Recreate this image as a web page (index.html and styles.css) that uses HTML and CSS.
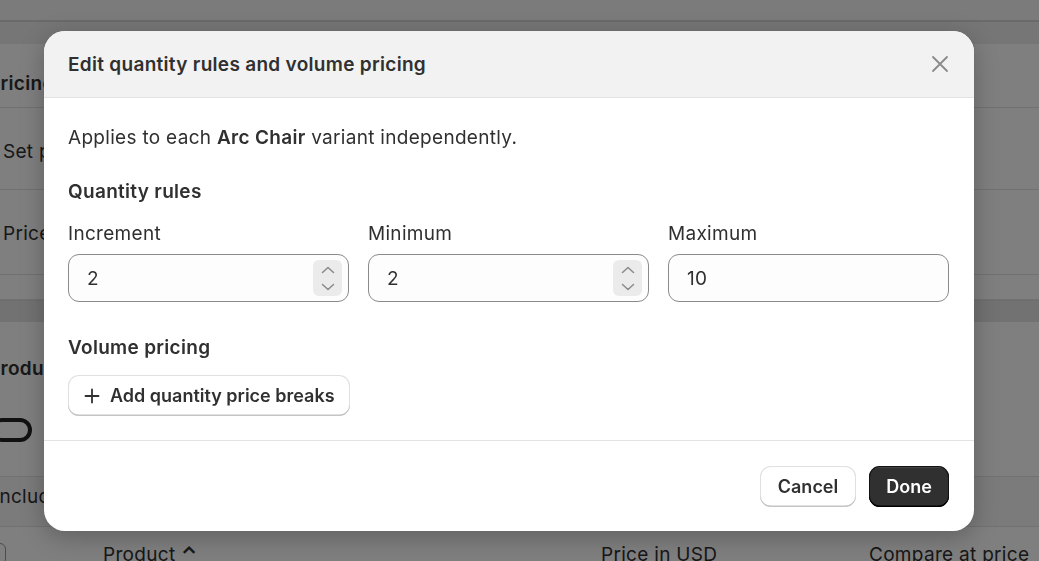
FILE: index.html
```html
<!DOCTYPE html>
<html lang="en">
<head>
    <meta charset="UTF-8">
    <meta name="viewport" content="width=device-width, initial-scale=1.0">
    <title>Edit quantity rules and volume pricing</title>
    <link rel="stylesheet" href="styles.css">
</head>
<body>
    <div class="page">
        <div class="topbar"></div>
        <div class="band"></div>

        <section class="card">
            <div class="row row-title"><h2>Pricing</h2></div>
            <div class="row row-mid"><span>Set price per variant</span></div>
            <div class="row row-tall"><span>Price rules</span></div>
            <div class="row row-thin"></div>
        </section>

        <div class="band band-dark"></div>

        <section class="card">
            <div class="card-head"><h2>Products</h2></div>
            <div class="toggle-row"><span class="toggle"></span></div>
            <div class="include-row">Include all variants</div>
            <div class="table-head">
                <span class="check"></span>
                <span class="col-product">Product <span class="sort">&#8963;</span></span>
                <span>Price in USD</span>
                <span>Compare at price</span>
            </div>
        </section>
    </div>

    <div class="backdrop"></div>

    <div class="modal" role="dialog" aria-labelledby="modal-title">
        <header class="modal-header">
            <h1 id="modal-title">Edit quantity rules and volume pricing</h1>
            <button class="close" aria-label="Close">
                <svg width="20" height="20" viewBox="0 0 20 20">
                    <path d="M3 3L17 17M17 3L3 17" stroke="#8a8a8a" stroke-width="1.8" stroke-linecap="round" fill="none"/>
                </svg>
            </button>
        </header>

        <div class="modal-body">
            <p class="intro">Applies to each <strong>Arc Chair</strong> variant independently.</p>

            <h3>Quantity rules</h3>
            <div class="fields">
                <label class="field">
                    <span class="label">Increment</span>
                    <span class="input">
                        <span class="value">2</span>
                        <span class="spinner">
                            <svg width="14" height="8" viewBox="0 0 14 8"><path d="M1.5 6.5L7 1.5L12.5 6.5" stroke="#8a8a8a" stroke-width="1.5" fill="none" stroke-linecap="round" stroke-linejoin="round"/></svg>
                            <svg width="14" height="8" viewBox="0 0 14 8"><path d="M1.5 1.5L7 6.5L12.5 1.5" stroke="#8a8a8a" stroke-width="1.5" fill="none" stroke-linecap="round" stroke-linejoin="round"/></svg>
                        </span>
                    </span>
                </label>
                <label class="field">
                    <span class="label">Minimum</span>
                    <span class="input">
                        <span class="value">2</span>
                        <span class="spinner">
                            <svg width="14" height="8" viewBox="0 0 14 8"><path d="M1.5 6.5L7 1.5L12.5 6.5" stroke="#8a8a8a" stroke-width="1.5" fill="none" stroke-linecap="round" stroke-linejoin="round"/></svg>
                            <svg width="14" height="8" viewBox="0 0 14 8"><path d="M1.5 1.5L7 6.5L12.5 1.5" stroke="#8a8a8a" stroke-width="1.5" fill="none" stroke-linecap="round" stroke-linejoin="round"/></svg>
                        </span>
                    </span>
                </label>
                <label class="field">
                    <span class="label">Maximum</span>
                    <span class="input">
                        <span class="value">10</span>
                    </span>
                </label>
            </div>

            <h3 class="volume">Volume pricing</h3>
            <button class="btn btn-add">
                <svg width="16" height="16" viewBox="0 0 16 16"><path d="M8 1.5V14.5M1.5 8H14.5" stroke="#303030" stroke-width="1.8" stroke-linecap="round"/></svg>
                Add quantity price breaks
            </button>
        </div>

        <footer class="modal-footer">
            <button class="btn">Cancel</button>
            <button class="btn btn-primary">Done</button>
        </footer>
    </div>
</body>
</html>
```

FILE: styles.css
```css
* { box-sizing: border-box; }

body {
    margin: 0;
    height: 561px;
    overflow: hidden;
    font-family: Inter, "Noto Sans", sans-serif;
    font-size: 19px;
    letter-spacing: 0.3px;
    color: #303030;
    background: #f1f1f1;
}

/* page underneath the dialog */
.page {
    margin-left: -12px;
    width: 1080px;
}
.topbar {
    height: 22px;
    background: #f7f7f7;
    border-bottom: 2px solid #d4d4d4;
}
.band {
    height: 22px;
    background: #ececec;
}
.band-dark {
    background: #e4e4e4;
    border-top: 1px solid #dcdcdc;
}
.card {
    background: #fff;
}
.row {
    display: flex;
    align-items: center;
    padding-left: 15px;
    border-bottom: 1px solid #e3e3e3;
}
.row h2, .card-head h2 {
    margin: 0;
    font-size: 19px;
    font-weight: 600;
}
.row-title { height: 64px; padding-left: 0; padding-top: 16px; }
.row-mid { height: 82px; padding-top: 6px; }
.row-tall { height: 85px; padding-top: 2px; }
.row-thin { height: 25px; }
.card-head {
    height: 74px;
    display: flex;
    align-items: flex-end;
    padding-bottom: 16px;
}
.toggle-row {
    height: 80px;
    padding: 22px 0 0 2px;
}
.toggle {
    display: block;
    width: 42px;
    height: 24px;
    border: 4px solid #222;
    border-radius: 12px;
}
.include-row {
    height: 51px;
    display: flex;
    align-items: center;
    padding-left: 6px;
    padding-bottom: 10px;
    background: #f7f7f7;
    border-top: 1px solid #e3e3e3;
    border-bottom: 1px solid #e3e3e3;
}
.table-head {
    display: grid;
    grid-template-columns: 29px 578px 268px 200px;
    align-items: center;
    height: 40px;
    padding-top: 14px;
    padding-left: 6px;
}
.check {
    width: 22px;
    height: 22px;
    margin-left: -10px;
    border: 1.5px solid #999;
    border-radius: 6px;
}
.col-product { padding-left: 80px; }
.sort { font-weight: 700; font-size: 20px; }

.backdrop {
    position: fixed;
    inset: 0;
    background: rgba(0, 0, 0, 0.5);
}

/* dialog */
.modal {
    position: absolute;
    left: 44px;
    top: 31px;
    width: 930px;
    height: 500px;
    background: #fff;
    border-radius: 21px;
    overflow: hidden;
    display: flex;
    flex-direction: column;
    box-shadow: 0 6px 24px rgba(0, 0, 0, 0.25);
}
.modal-header {
    height: 67px;
    flex-shrink: 0;
    display: flex;
    align-items: center;
    justify-content: space-between;
    padding: 0 22px 0 24px;
    background: #f2f2f2;
    border-bottom: 1px solid #e3e3e3;
}
.modal-header h1 {
    margin: 0;
    font-size: 19px;
    font-weight: 600;
}
.close {
    border: none;
    background: none;
    padding: 2px;
    display: flex;
    cursor: pointer;
}

.modal-body {
    flex: 1;
    padding: 26px 25px 0 24px;
}
.intro {
    margin: 0;
    line-height: 27px;
}
.intro strong { font-weight: 600; }
.modal-body h3 {
    margin: 27px 0 0;
    font-size: 19px;
    font-weight: 600;
    line-height: 27px;
}
.fields {
    display: grid;
    grid-template-columns: repeat(3, 1fr);
    gap: 19px;
    margin-top: 15px;
}
.field {
    display: flex;
    flex-direction: column;
}
.label {
    line-height: 27px;
    margin-bottom: 7px;
}
.input {
    display: flex;
    align-items: center;
    justify-content: space-between;
    height: 48px;
    padding: 0 6px 0 18px;
    border: 1px solid #8a8a8a;
    border-radius: 11px;
    background: #fdfdfd;
}
.spinner {
    display: flex;
    flex-direction: column;
    align-items: center;
    justify-content: center;
    gap: 9px;
    width: 29px;
    height: 36px;
    background: #ebebeb;
    border-radius: 6px;
}
.spinner svg { display: block; }
.modal-body h3.volume { margin-top: 32px; }

.btn {
    font-family: inherit;
    font-size: 18px;
    font-weight: 600;
    letter-spacing: 0;
    white-space: nowrap;
    color: #303030;
    background: #fff;
    height: 41px;
    padding: 0 17px;
    border: none;
    border-radius: 11px;
    box-shadow: inset 0 -1.5px 0 #c4c4c4, inset 0 0 0 1px #e0e0e0;
    display: inline-flex;
    align-items: center;
    cursor: pointer;
}
.btn svg { flex-shrink: 0; }
.btn-add {
    margin-top: 14px;
    width: 282px;
    padding-left: 16px;
    gap: 10px;
}
.btn-primary {
    color: #fff;
    background: #303030;
    box-shadow: inset 0 -1.5px 0 #000, inset 0 0 0 1px #111, inset 0 1.5px 0 rgba(255, 255, 255, 0.2);
}

.modal-footer {
    height: 91px;
    flex-shrink: 0;
    display: flex;
    justify-content: flex-end;
    align-items: center;
    gap: 13px;
    padding: 0 25px;
    border-top: 1px solid #e3e3e3;
}
.modal-footer .btn:first-child { width: 96px; justify-content: center; }
.modal-footer .btn-primary { width: 80px; justify-content: center; }
```
